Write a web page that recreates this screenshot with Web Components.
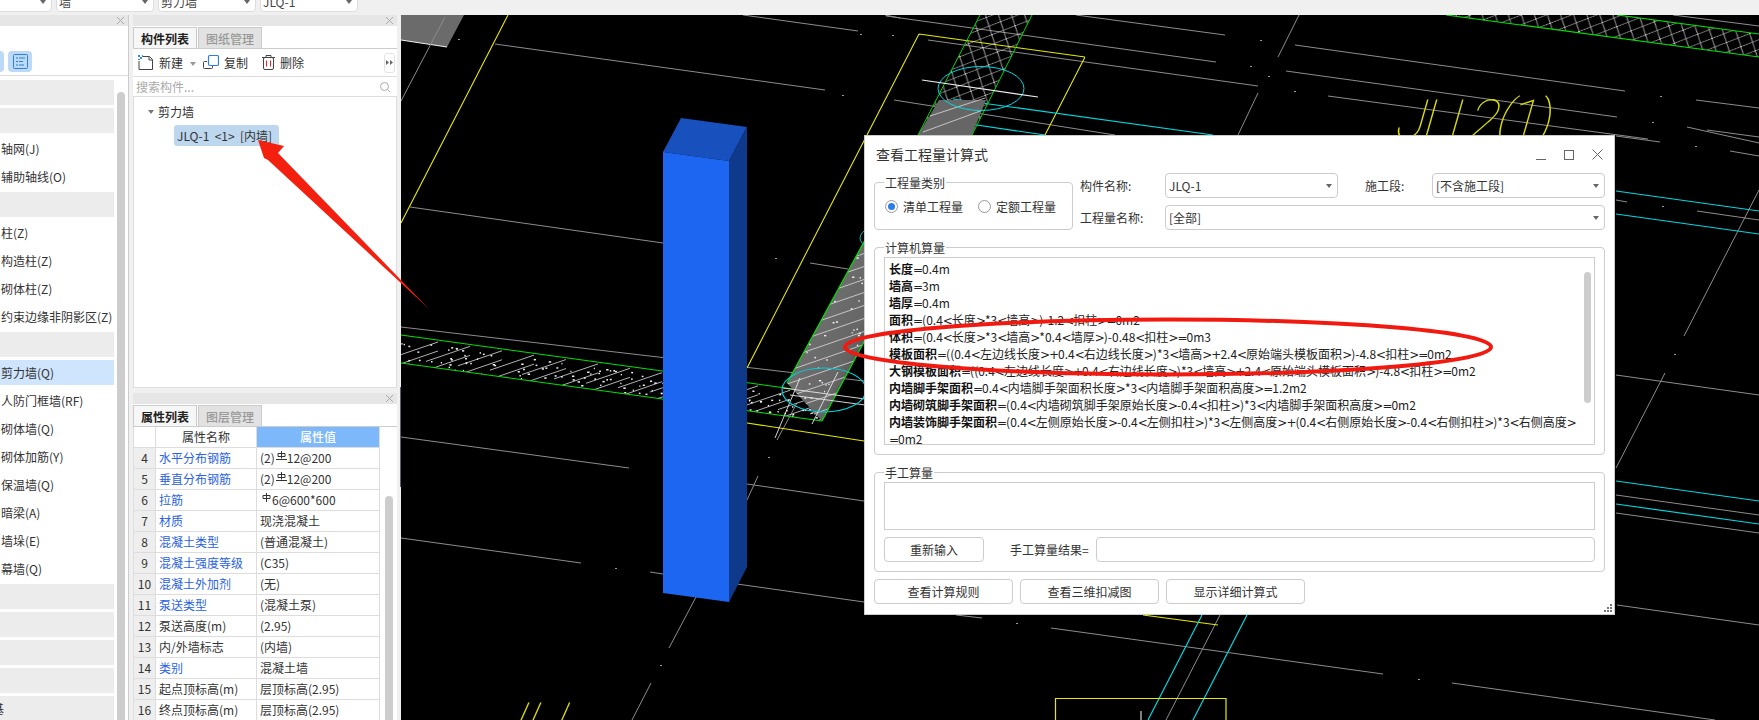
<!DOCTYPE html>
<html lang="zh">
<head>
<meta charset="utf-8">
<title>查看工程量计算式</title>
<style>
  html, body { margin: 0; height: 100%; overflow: hidden; background: #f0f0f0; }
  body { font: 12px/17px "Noto Sans CJK SC", "Noto Sans", sans-serif; color: #333; }
</style>
</head>
<body>
<app-shell>
  <top-bar slot="top"></top-bar>
  <nav-panel slot="nav"></nav-panel>
  <dock-panel slot="mid" tabs="构件列表,图纸管理" style="height:373px"><comp-tree></comp-tree></dock-panel>
  <dock-panel slot="mid" tabs="属性列表,图层管理" style="flex:1;min-height:0"><prop-table></prop-table></dock-panel>
  <cad-view slot="view">
    <calc-dialog></calc-dialog>
  </cad-view>
  <red-markup slot="over"></red-markup>
</app-shell>

<script>
const FONT = '"Noto Sans CJK SC", "Noto Sans", sans-serif';

/** Close cross used by the dock strips. */
const crossIcon = (color = "#aaa") => `
  <svg width="9" height="9" viewBox="0 0 9 9" fill="none" stroke="${color}"><path d="M1 1l7 7M8 1L1 8"/></svg>`;

/**
 * @class AppShell
 * @description Page frame: toolbar on top, then nav, dock column and CAD view side by side.
 */
class AppShell extends HTMLElement {
  constructor() {
    super();
    this.attachShadow({ mode: "open" });
    this.shadowRoot.innerHTML = `
      <style>
        :host { display: flex; flex-direction: column; width: 1759px; height: 720px; position: relative; overflow: hidden; }
        .main { flex: 1; min-height: 0; display: flex; }
        .mid { width: 264px; margin-left: 4px; margin-right: 3px; display: flex; flex-direction: column; gap: 5px; }
        .split { width: 1px; height: 100px; margin-top: 372px; background: #5a6470; flex: none; }
        .view { flex: 1; min-width: 0; display: flex; }
      </style>
      <slot name="top"></slot>
      <div class="main">
        <slot name="nav"></slot>
        <div class="mid"><slot name="mid"></slot></div>
        <div class="split"></div>
        <div class="view"><slot name="view"></slot></div>
      </div>
      <slot name="over"></slot>
    `;
  }
}

/**
 * @class TopBar
 * @description The row of combo boxes, cut off by the top edge of the screenshot.
 */
class TopBar extends HTMLElement {
  constructor() {
    super();
    this.attachShadow({ mode: "open" });
    const combos = ["", "墙", "剪力墙", "JLQ-1"];
    this.shadowRoot.innerHTML = `
      <style>
        :host { display: flex; gap: 4px; height: 15px; overflow: hidden; background: #f0f0f0; padding-left: 0; margin-left: -46px; }
        .c { width: 98px; height: 22px; margin-top: -10px; box-sizing: border-box; background: #fff; border: 1px solid #ddd;
             border-radius: 4px; padding-left: 2px; line-height: 22px; font-size: 12px; color: #444; position: relative; }
        .c i { position: absolute; right: 5px; top: 9px; border: 3px solid transparent; border-top: 4px solid #666; }
      </style>
      ${combos.map((t) => `<div class="c">${t}<i></i></div>`).join("")}
    `;
  }
}

/**
 * @class NavPanel
 * @description Left module tree; section rows are grey, the entries are plain text.
 */
class NavPanel extends HTMLElement {
  constructor() {
    super();
    this.attachShadow({ mode: "open" });
    const rows = [
      "", "", "轴网(J)", "辅助轴线(O)", "", "柱(Z)", "构造柱(Z)", "砌体柱(Z)", "约束边缘非阴影区(Z)", "",
      "*剪力墙(Q)", "人防门框墙(RF)", "砌体墙(Q)", "砌体加筋(Y)", "保温墙(Q)", "暗梁(A)", "墙垛(E)", "幕墙(Q)",
      "", "", "", "", "-基",
    ];
    const row = (t) => {
      if (t === "") return `<div class="r g"></div>`;
      if (t[0] === "*") return `<div class="r on">${t.slice(1)}</div>`;
      if (t[0] === "-") return `<div class="r g cut">${t.slice(1)}</div>`;
      return `<div class="r">${t}</div>`;
    };
    this.shadowRoot.innerHTML = `
      <style>
        :host { display: flex; flex-direction: column; width: 129px; flex: none; box-sizing: border-box; background: #fff;
                border-right: 1px solid #ccc; overflow: hidden; color: #333; }
        .strip { height: 11px; background: #e6e6e6; display: flex; justify-content: flex-end; align-items: center; padding-right: 3px; }
        .tools { height: 50px; box-sizing: border-box; border-bottom: 1px solid #ddd; display: flex; align-items: flex-end; gap: 4px; padding: 0 0 3px; margin-left: -20px; }
        .b { width: 24px; height: 21px; border-radius: 4px; background: #bcd9f6; display: flex; align-items: center; justify-content: center; }
        .body { display: flex; gap: 3px; flex: 1; min-height: 0; }
        .list { width: 114px; padding-top: 4px; display: flex; flex-direction: column; gap: 3px; }
        .r { height: 25px; flex: none; line-height: 25px; padding-left: 1px; font-size: 12px; white-space: nowrap; overflow: hidden; }
        .g { background: #ececec; }
        .on { background: #cfe4fd; }
        .cut { text-indent: -9px; }
        .sb { width: 8px; margin-top: 16px; background: #cdcdcd; border-radius: 4px 4px 0 0; }
      </style>
      <div class="strip">${crossIcon()}</div>
      <div class="tools">
        <div class="b"></div>
        <div class="b">
          <svg width="15" height="15" viewBox="0 0 15 15" fill="none" stroke="#2f7fd8">
            <rect x=".5" y=".5" width="14" height="14" rx="1"/>
            <path d="M3 4h2M6 4h6M3 7.500h2M6 7.500h4M3 11h2M6 11h5"/>
          </svg>
        </div>
      </div>
      <div class="body">
        <div class="list">${rows.map(row).join("")}</div>
        <div class="sb"></div>
      </div>
    `;
  }
}

/**
 * @class DockPanel
 * @description Dockable panel: grey strip with close cross, two tabs, slotted body.
 * @attr tabs - comma separated tab titles, the first one is active.
 */
class DockPanel extends HTMLElement {
  constructor() {
    super();
    this.attachShadow({ mode: "open" });
  }

  connectedCallback() {
    const [active, other] = (this.getAttribute("tabs") || "").split(",");
    this.shadowRoot.innerHTML = `
      <style>
        :host { display: flex; flex-direction: column; background: #fff; overflow: hidden; }
        .strip { height: 11px; background: #e6e6e6; display: flex; justify-content: flex-end; align-items: center; padding-right: 3px; flex: none; }
        .tabs { display: flex; height: 23px; box-sizing: border-box; border-bottom: 1px solid #ccc; padding-top: 1px; gap: 1px; flex: none; }
        .t { width: 64px; text-align: center; line-height: 21px; font-size: 12px; box-sizing: border-box;
             border: 1px solid #ccc; border-bottom: 0; }
        .a { background: #f6f6f6; color: #222; font-weight: 700; }
        .i { background: #e2e2e2; color: #999; font-weight: 500; }
        .body { flex: 1; min-height: 0; display: flex; flex-direction: column; }
      </style>
      <div class="strip">${crossIcon()}</div>
      <div class="tabs"><div class="t a">${active}</div><div class="t i">${other}</div></div>
      <div class="body"><slot></slot></div>
    `;
  }
}

/**
 * @class CompTree
 * @description Component list: action buttons, search field and the tree.
 */
class CompTree extends HTMLElement {
  constructor() {
    super();
    this.attachShadow({ mode: "open" });
    this.shadowRoot.innerHTML = `
      <style>
        :host { display: flex; flex-direction: column; flex: 1; min-height: 0; color: #333; font-size: 12px; }
        .acts { height: 27px; flex: none; display: flex; align-items: center; border-bottom: 1px solid #ddd; padding-left: 5px; position: relative; }
        .acts svg { flex: none; }
        .lab { margin-left: 5px; letter-spacing: 0; }
        .caret { margin: 1px 0 0 7px; border: 3px solid transparent; border-top: 4px solid #999; height: 0; width: 0; transform: translateY(2px); }
        .more { margin-left: auto; margin-right: 2px; width: 11px; height: 20px; border: 1px solid #e4e4e4; border-radius: 3px; display: flex; align-items: center; justify-content: center; box-sizing: border-box; }
        .search { height: 19px; flex: none; display: flex; align-items: center; justify-content: space-between; border-bottom: 1px solid #ddd; padding: 0 7px 0 3px; color: #aaa; }
        .tree { flex: 1; border: 1px solid #ddd; border-top: 0; padding: 4px 0 0 14px; }
        .root { display: flex; align-items: center; height: 20px; color: #333; }
        .root i { border: 3px solid transparent; border-top: 4px solid #777; margin: 4px 4px 0 0; }
        .sel { margin: 4px 0 0 26px; width: 105px; height: 21px; line-height: 21px; padding-left: 3px; box-sizing: border-box;
               background: #bdd7ee; border-radius: 3px; white-space: pre; color: #333; }
      </style>
      <div class="acts">
        <svg width="16" height="15" viewBox="0 0 16 15" fill="none" stroke="#444">
          <path d="M5 1.500h6.500l3 3V14.500H1V6"/><path d="M11 1.500v3.500h3.500"/>
          <path d="M0 0h2v2H0zM4 0h1v2H4zM2 2h2v2H2zM0 4h2v1H0z" fill="#3b82e6" stroke="none"/>
        </svg>
        <span class="lab">新建</span><span class="caret"></span>
        <svg style="margin-left:7px" width="16" height="15" viewBox="0 0 16 15" fill="none">
          <path d="M4 6.500H1.500a1 1 0 0 0-1 1v5a1 1 0 0 0 1 1h7a1 1 0 0 0 1-1V11" stroke="#444"/>
          <rect x="5.500" y=".5" width="10" height="10" rx="1.500" stroke="#2f7fd8" stroke-width="1.200"/>
        </svg>
        <span class="lab">复制</span>
        <svg style="margin-left:14px" width="13" height="15" viewBox="0 0 13 15" fill="none" stroke="#444">
          <path d="M0 2.500h13M4 2.500V.5h5v2"/><rect x="1.500" y="2.500" width="10" height="12" rx="1.500"/>
          <path d="M4.500 5.500v6M8.500 5.500v6" stroke="#d22"/>
        </svg>
        <span class="lab">删除</span>
        <span class="more">
          <svg width="7" height="7" viewBox="0 0 7 7" fill="#666"><path d="M0 1l3 2.500L0 6zM4 1l3 2.500L4 6z"/></svg>
        </span>
      </div>
      <div class="search">
        <span>搜索构件...</span>
        <svg width="10" height="10" viewBox="0 0 10 10" fill="none" stroke="#aaa"><circle cx="4.500" cy="4.500" r="4"/><path d="M7.500 7.500L10 10"/></svg>
      </div>
      <div class="tree">
        <div class="root"><i></i>剪力墙</div>
        <div class="sel">JLQ-1  &lt;1&gt;  [内墙]</div>
      </div>
    `;
  }
}

/**
 * @class PropTable
 * @description Property grid. Names of public attributes are blue, private ones dark.
 */
class PropTable extends HTMLElement {
  constructor() {
    super();
    this.attachShadow({ mode: "open" });
    const bar3 = `<svg class="sym" width="11" height="10" viewBox="0 0 11 10" fill="none" stroke="#333"><path d="M2 2.500h7v3H2zM5.500 0v7.500M0 8.500h11"/></svg>`;
    const bar1 = `<svg class="sym" width="11" height="10" viewBox="0 0 11 10" fill="none" stroke="#333"><path d="M2 2.500h7v3H2zM5.500 0v9"/></svg>`;
    const data = [
      [4, "水平分布钢筋", `(2)${bar3}12@200`, 1],
      [5, "垂直分布钢筋", `(2)${bar3}12@200`, 1],
      [6, "拉筋", `${bar1}6@600*600`, 1],
      [7, "材质", "现浇混凝土", 1],
      [8, "混凝土类型", "(普通混凝土)", 1],
      [9, "混凝土强度等级", "(C35)", 1],
      [10, "混凝土外加剂", "(无)", 1],
      [11, "泵送类型", "(混凝土泵)", 1],
      [12, "泵送高度(m)", "(2.95)", 0],
      [13, "内/外墙标志", "(内墙)", 0],
      [14, "类别", "混凝土墙", 1],
      [15, "起点顶标高(m)", "层顶标高(2.95)", 0],
      [16, "终点顶标高(m)", "层顶标高(2.95)", 0],
    ];
    this.shadowRoot.innerHTML = `
      <style>
        :host { display: flex; flex: 1; min-height: 0; font-size: 12px; color: #333; overflow: hidden; }
        table { border-collapse: collapse; table-layout: fixed; width: 246px; height: max-content; margin-left: 0; flex: none; }
        th, td { border: 1px solid #ddd; height: 20px; padding: 0 0 0 3px; font-weight: 400; line-height: 20px; white-space: nowrap; overflow: hidden; box-sizing: border-box; }
        thead th { border-top: 0; }
        th.h { text-align: center; padding: 0; color: #333; }
        th.v { text-align: center; padding: 0; background: #7db8fa; color: #fff; font-weight: 500; }
        td.n { background: #eee; text-align: center; padding: 0; }
        td.b { color: #2a62e2; }
        tbody tr { height: 21px; }
        .sym { vertical-align: 2px; margin: 0 0 0 1px; }
        .sb { width: 8px; margin: 69px 0 0 5px; background: #cdcdcd; border-radius: 4px 4px 0 0; flex: none; }
      </style>
      <table>
        <colgroup><col style="width:22px"><col style="width:101px"><col style="width:123px"></colgroup>
        <thead><tr style="height:20px"><th></th><th class="h">属性名称</th><th class="v">属性值</th></tr></thead>
        <tbody>
          ${data.map(([n, k, v, pub]) => `<tr><td class="n">${n}</td><td class="${pub ? "b" : ""}">${k}</td><td>${v}</td></tr>`).join("")}
        </tbody>
      </table>
      <div class="sb"></div>
    `;
  }
}

/**
 * @class CadView
 * @description 3D CAD canvas. The SVG uses page coordinates through its viewBox,
 * the wall column is drawn last. Windows floating on it go into the slot.
 */
class CadView extends HTMLElement {
  constructor() {
    super();
    this.attachShadow({ mode: "open" });
  }

  connectedCallback() {
    this.render();
  }

  /** Small seeded generator, so the rebar dots stay the same from run to run. */
  dots(seed, count, place) {
    let s = seed;
    const rnd = () => (s = (s * 16807) % 2147483647) / 2147483647;
    let out = "";
    for (let i = 0; i < count; i++) {
      const [x, y] = place(rnd(), rnd());
      out += `<rect x="${x.toFixed(1)}" y="${y.toFixed(1)}" width="${1 + rnd() * 1.5}" height="1.500"/>`;
    }
    return out;
  }

  render() {
    const seg = (list) => list.map((p) => `M${p[0]} ${p[1]}L${p[2]} ${p[3]}`).join("");
    const gray = seg([
      [445,17,401,101], [495,44,825,90], [743,15,858,31], [885,15,900,18], [410,207,663,243], [401,327,864,381],
      [810,263,848,269], [797,403,777,440], [758,476,747,500], [696,597,669,648], [651,683,632,720],
      [401,437,629,468], [747,484,864,501], [401,538,581,563], [650,572,663,574], [737,584,864,602],
      [1076,15,1225,35], [886,16,1216,62], [928,40,1258,86], [894,100,1115,135], [1295,45,1625,91], [1286,71,1617,117],
      [1328,96,1648,139], [1696,100,1759,108], [1687,127,1759,143], [1673,15,1759,26], [1299,15,1278,57], [1258,93,1238,135],
      [1051,628,1383,674], [1452,683,1715,720], [956,615,982,618], [1220,615,1166,720], [1617,605,1759,625],
      [1616,136,1660,142], [1707,130,1759,137], [1730,151,1759,156], [1616,200,1627,202], [1697,211,1759,220],
      [1759,190,1684,336], [1665,373,1616,468], [1616,375,1759,395], [1616,495,1759,515], [1616,513,1759,533],
    ]);
    const cyan = seg([
      [953,99,1213,135], [943,120,1045,135], [1202,615,1148,720], [1247,615,1193,720],
      [1616,191,1759,211], [1616,214,1759,234], [1616,481,1759,501], [1616,504,1759,524],
    ]);
    const yellow = seg([
      [508,15,401,223], [919,34,747,368], [919,34,1085,57], [1085,57,1045,135], [747,423,864,441], [1143,615,1218,625],
    ]);
    const specks = [[458,39],[892,35],[1260,40],[1250,66],[1268,76],[1294,91],[1660,96],[1652,122],[860,34],[842,95],[775,258],
      [615,568],[660,665],[768,457],[1016,623],[1418,679],[1695,146],[1662,206],[1674,354]];

    // transverse bars of the two shallow strips
    let hatch = "";
    for (let x = 380; x < 850; x += 32) {
      hatch += `M${x} ${345 + (x - 380) * 0.137 + 26}l58 -20`;
      hatch += `M${x + 14} ${345 + (x - 380) * 0.137 + 12}l44 -15`;
    }
    let diag = "";
    for (let y = 230; y < 420; y += 13) diag += `M770 ${y + 30}l110 -38`;

    this.shadowRoot.innerHTML = `
      <style>
        :host { display: block; flex: 1; position: relative; background: #000; overflow: hidden; font-family: ${FONT}; }
        svg { position: absolute; inset: 0; display: block; }
        text { font-family: Roboto, "Liberation Sans", sans-serif; font-weight: 100; }
      </style>
      <svg width="1358" height="705" viewBox="401 15 1358 705" fill="none" stroke-width="1">
        <defs>
          <pattern id="xh" width="15" height="15" patternUnits="userSpaceOnUse" patternTransform="translate(0 0) rotate(16) skewX(-18)">
            <path d="M0 0L15 15M15 0L0 15" stroke="#ddd" stroke-width=".8"/>
          </pattern>
          <linearGradient id="fade" x1="0" y1="0" x2="1" y2="1">
            <stop offset="0" stop-color="#7a7a7a"/><stop offset=".7" stop-color="#666"/><stop offset="1" stop-color="#333"/>
          </linearGradient>
          <clipPath id="c1"><path d="M401 335L822 393V421L401 363Z"/></clipPath>
          <clipPath id="c2"><path d="M865 240L787 383L822 421L865 340Z"/></clipPath>
        </defs>

        <path d="M401 15H464L447 47L401 40Z" fill="#6b6b6b"/>
        <path d="M401 40L447 47" stroke="#eee" stroke-width="1.200"/>

        <path d="${gray}" stroke="#8c8c8c"/>
        <path d="${yellow}" stroke="#e8e800" stroke-width="1.100"/>
        <path d="${cyan}" stroke="#00d8e0" stroke-width="1.200"/>

        <!-- shallow rebar strip running behind the wall -->
        <g clip-path="url(#c1)"><path d="${hatch}" stroke="#ddd" stroke-width=".8"/><g fill="#eee">${this.dots(77, 170, (a, b) => [401 + a * 420, 340 + a * 58 + b * 24])}</g></g>
        <path d="M401 335L822 393M401 363L822 421" stroke="#00e000" stroke-width="1.200"/>

        <!-- diagonal strip, partly solid -->
        <path d="M865 240L787 383L822 421L865 340Z" fill="url(#fade)"/>
        <g clip-path="url(#c2)"><path d="${diag}" stroke="#ddd" stroke-width=".8"/><g fill="#eee">${this.dots(31, 60, (a, b) => [790 + a * 75, 245 + b * 170])}</g></g>
        <path d="M865 240L787 383M865 340L822 421" stroke="#00e000" stroke-width="1.200"/>
        <path d="M783 388l82 11M790 395l75 10M800 378l-25 60M838 372l-26 52" stroke="#e8e8e8" stroke-width=".9"/>
        <ellipse cx="824" cy="390" rx="42" ry="22" stroke="#00d0d8" stroke-width="1.100"/>
        <ellipse cx="890" cy="238" rx="30" ry="14" stroke="#00b8c0"/>

        <!-- upper strip through the yellow frame -->
        <path d="M980 15H1032L972 135H918Z" fill="url(#xh)"/>
        <path d="M939 100H986L972 135H918Z" fill="#666"/>
        <path d="M923 132l60 -22M930 116l55 -18" stroke="#ddd" stroke-width=".8"/>
        <path d="M980 15L918 135M1032 15L972 135" stroke="#00d800"/>
        <ellipse cx="981" cy="88.500" rx="43" ry="22" stroke="#00d8e0"/>
        <path d="M922 80L1038 97" stroke="#eee" stroke-width="1.200"/>

        <!-- strip in the top right corner -->
        <path d="M1446 15H1617L1759 34V57Z" fill="url(#xh)"/>
        <path d="M1446 15L1759 57M1617 15L1759 34" stroke="#00e000" stroke-width="1.200"/>

        <g fill="#999">${specks.map(([x, y]) => `<rect x="${x}" y="${y}" width="2" height="1"/>`).join("")}</g>

        <!-- axis labels lying on the floor, only their tops show -->
        <text transform="translate(1393 138) skewX(-16)" font-size="54" fill="#dcdc00" textLength="156">JLI 2(1)</text>
        <text transform="translate(488 741) skewX(-24)" font-size="54" fill="#dcdc00">JLI</text>

        <path d="M1055.500 720V698.500H1226V720" stroke="#e8e800" stroke-width="1.200"/>
        <path d="M1141 711V720" stroke="#fff"/>

        <!-- selected shear wall -->
        <path d="M663 152L681 118L747 127L729 161Z" fill="#1850bd"/>
        <path d="M729 161L747 127V567L729 602Z" fill="#0f3a8c"/>
        <path d="M663 152L729 161V602L663 593Z" fill="#1c66f2"/>
      </svg>
      <slot></slot>
    `;
  }
}

/**
 * @class GroupBox
 * @description Bordered box with the caption sitting on its top edge.
 * @attr label - caption text.
 */
class GroupBox extends HTMLElement {
  constructor() {
    super();
    this.attachShadow({ mode: "open" });
  }

  connectedCallback() {
    this.shadowRoot.innerHTML = `
      <style>
        :host { display: block; position: relative; box-sizing: border-box; border: 1px solid #ccc; border-radius: 4px; }
        .cap { position: absolute; left: 9px; top: -9px; background: #fff; padding: 0 1px; line-height: 17px; font-size: 12px; color: #333; }
      </style>
      <div class="cap">${this.getAttribute("label")}</div>
      <slot></slot>
    `;
  }
}

/** Combo box with a small down arrow. */
class UiCombo extends HTMLElement {
  constructor() {
    super();
    this.attachShadow({ mode: "open" });
    this.shadowRoot.innerHTML = `
      <style>
        :host { display: flex; align-items: center; height: 25px; box-sizing: border-box; border: 1px solid #ccc; border-radius: 4px; padding: 0 5px 0 3px; font-size: 12px; color: #333; background: #fff; }
        span { flex: 1; }
        i { border: 3px solid transparent; border-top: 4px solid #666; margin-top: 4px; }
      </style>
      <span><slot></slot></span><i></i>
    `;
  }
}

/** Push button of the dialog. */
class UiButton extends HTMLElement {
  constructor() {
    super();
    this.attachShadow({ mode: "open" });
    this.shadowRoot.innerHTML = `
      <style>
        :host { display: flex; align-items: center; justify-content: center; height: 25px; box-sizing: border-box; border: 1px solid #ccc; border-radius: 4px; font-size: 12px; color: #333; background: #fff; }
      </style>
      <slot></slot>
    `;
  }
}

/**
 * @class CalcDialog
 * @description The floating window that shows the quantity formulas.
 */
class CalcDialog extends HTMLElement {
  constructor() {
    super();
    this.attachShadow({ mode: "open" });
    this.render();
  }

  /** Formula line; the operators take the wide glyphs of the reference font. */
  line(label, formula) {
    const esc = formula.replace(/[<>=+]/g, (c) => {
      const map = { "<": "&lt;", ">": "&gt;", "=": "=", "+": "+" };
      return `<u>${map[c]}</u>`;
    });
    return `${label ? `<b>${label}</b>` : ""}${esc}`;
  }

  render() {
    const lines = [
      ["长度", "=0.4m"],
      ["墙高", "=3m"],
      ["墙厚", "=0.4m"],
      ["面积", "=(0.4<长度>*3<墙高>)-1.2<扣柱>=0m2"],
      ["体积", "=(0.4<长度>*3<墙高>*0.4<墙厚>)-0.48<扣柱>=0m3"],
      ["模板面积", "=((0.4<左边线长度>+0.4<右边线长度>)*3<墙高>+2.4<原始端头模板面积>)-4.8<扣柱>=0m2"],
      ["大钢模板面积", "=((0.4<左边线长度>+0.4<右边线长度>)*3<墙高>+2.4<原始端头模板面积>)-4.8<扣柱>=0m2"],
      ["内墙脚手架面积", "=0.4<内墙脚手架面积长度>*3<内墙脚手架面积高度>=1.2m2"],
      ["内墙砌筑脚手架面积", "=(0.4<内墙砌筑脚手架原始长度>-0.4<扣柱>)*3<内墙脚手架面积高度>=0m2"],
      ["内墙装饰脚手架面积", "=(0.4<左侧原始长度>-0.4<左侧扣柱>)*3<左侧高度>+(0.4<右侧原始长度>-0.4<右侧扣柱>)*3<右侧高度>"],
      ["", "=0m2"],
    ];
    this.shadowRoot.innerHTML = `
      <style>
        :host { position: absolute; left: 463px; top: 120px; width: 751px; height: 480px; box-sizing: border-box; background: #fff;
                border: 1px solid #ccc; padding: 0 9px; display: flex; flex-direction: column;
                font-size: 12px; line-height: 17px; color: #333; }
        .title { height: 37px; flex: none; display: flex; align-items: center; padding-left: 2px; box-sizing: border-box; font-size: 14px; }
        .title span { flex: 1; }
        .win { display: flex; gap: 18px; align-items: center; margin-right: 2px; }
        .head { display: flex; height: 57px; flex: none; }
        .kind { width: 199px; height: 48px; align-self: flex-end; display: flex; align-items: center; padding-left: 10px; box-sizing: border-box; }
        .radio { display: flex; align-items: center; gap: 5px; margin-right: 15px; }
        .radio i { width: 13px; height: 13px; box-sizing: border-box; border: 1px solid #999; border-radius: 50%; display: flex; align-items: center; justify-content: center; }
        .radio i.on::after { content: ""; width: 7px; height: 7px; border-radius: 50%; background: #2b7de9; }
        .fields { flex: 1; margin-left: 7px; display: grid; grid-template-columns: 85px 173px 94px 173px; grid-template-rows: 25px 25px; row-gap: 7px; align-items: center; }
        .wide { grid-column: 2 / 5; }
        .ind { padding-left: 27px; }
        .auto { margin-top: 17px; height: 208px; padding: 9px; flex: none; }
        .box { border: 1px solid #ccc; box-sizing: border-box; }
        .text { height: 188px; padding: 2px 0 0 4px; position: relative; color: #222; white-space: nowrap; overflow: hidden; }
        .text div.f { height: 17px; line-height: 17px; }
        .text b { font-weight: 700; color: #111; }
        .text u { text-decoration: none; font-family: "DejaVu Sans", sans-serif; font-size: 12px; letter-spacing: -1px; line-height: 0; }
        .sb { position: absolute; right: 3px; top: 14px; width: 7px; height: 131px; background: #cdcdcd; border-radius: 4px; }
        .manual { margin-top: 17px; height: 100px; padding: 9px; flex: none; }
        .in { height: 48px; }
        .row { display: flex; align-items: center; margin-top: 7px; }
        .row .lab { margin-left: 26px; width: 86px; flex: none; }
        .row .res { flex: 1; height: 25px; border-radius: 4px; }
        .foot { display: flex; gap: 7px; margin-top: 7px; }
        .foot ui-button { width: 139px; }
        .grip { position: absolute; right: 1px; bottom: 1px; }
      </style>
      <div class="title">
        <span>查看工程量计算式</span>
        <div class="win">
          <svg width="10" height="11" viewBox="0 0 10 11" stroke="#666" fill="none"><path d="M0 10.500h10"/></svg>
          <svg width="10" height="10" viewBox="0 0 10 10" stroke="#666" fill="none"><rect x=".5" y=".5" width="9" height="9"/></svg>
          <svg width="11" height="11" viewBox="0 0 11 11" stroke="#666" fill="none"><path d="M.5 .5l10 10M10.500 .5l-10 10"/></svg>
        </div>
      </div>
      <div class="head">
        <group-box class="kind" label="工程量类别">
          <div style="display:flex">
            <label class="radio"><i class="on"></i>清单工程量</label>
            <label class="radio"><i></i>定额工程量</label>
          </div>
        </group-box>
        <div class="fields">
          <span>构件名称:</span><ui-combo>JLQ-1</ui-combo>
          <span class="ind">施工段:</span><ui-combo>[不含施工段]</ui-combo>
          <span>工程量名称:</span><ui-combo class="wide">[全部]</ui-combo>
        </div>
      </div>
      <group-box class="auto" label="计算机算量">
        <div class="box text">
          ${lines.map(([k, v]) => `<div class="f">${this.line(k, v)}</div>`).join("")}
          <div class="sb"></div>
        </div>
      </group-box>
      <group-box class="manual" label="手工算量">
        <div class="box in"></div>
        <div class="row">
          <ui-button style="width:100px">重新输入</ui-button>
          <span class="lab">手工算量结果=</span>
          <div class="box res"></div>
        </div>
      </group-box>
      <div class="foot">
        <ui-button>查看计算规则</ui-button>
        <ui-button>查看三维扣减图</ui-button>
        <ui-button>显示详细计算式</ui-button>
      </div>
      <svg class="grip" width="10" height="10" viewBox="0 0 10 10" fill="#777">
        <path d="M7 1h2v2H7zM4 4h2v2H4zM7 4h2v2H7zM1 7h2v2H1zM4 7h2v2H4zM7 7h2v2H7z"/>
      </svg>
    `;
  }
}

/**
 * @class RedMarkup
 * @description Hand-drawn red arrow and ring, lying over the whole screenshot.
 */
class RedMarkup extends HTMLElement {
  constructor() {
    super();
    this.attachShadow({ mode: "open" });
    this.shadowRoot.innerHTML = `
      <style>
        :host { position: absolute; inset: 0; pointer-events: none; }
        svg { display: block; }
      </style>
      <svg width="1759" height="720" viewBox="0 0 1759 720" fill="none">
        <path d="M258 140L284 146L278 153L429 309L268 160L264 158Z" fill="#f4200f"/>
        <ellipse cx="1168" cy="347" rx="323" ry="27.500" stroke="#f01a10" stroke-width="4"/>
      </svg>
    `;
  }
}

customElements.define("app-shell", AppShell);
customElements.define("top-bar", TopBar);
customElements.define("nav-panel", NavPanel);
customElements.define("dock-panel", DockPanel);
customElements.define("comp-tree", CompTree);
customElements.define("prop-table", PropTable);
customElements.define("cad-view", CadView);
customElements.define("group-box", GroupBox);
customElements.define("ui-combo", UiCombo);
customElements.define("ui-button", UiButton);
customElements.define("calc-dialog", CalcDialog);
customElements.define("red-markup", RedMarkup);
</script>
</body>
</html>
